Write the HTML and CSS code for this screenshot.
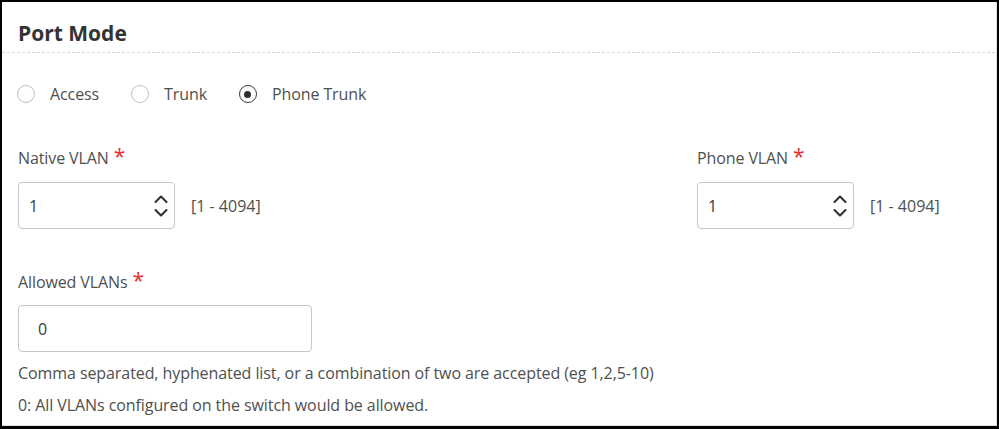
FILE: index.html
```html
<!DOCTYPE html>
<html lang="en">
<head>
<meta charset="utf-8">
<title>Port Mode</title>
<link rel="stylesheet" href="styles.css">
</head>
<body>
<div class="frame">
  <div class="panel">
    <div class="header">
      <h2 class="title">Port Mode</h2>
    </div>
    <div class="content">
      <div class="radios">
        <label class="radio"><span class="circle"></span><span class="rlabel">Access</span></label>
        <label class="radio"><span class="circle"></span><span class="rlabel">Trunk</span></label>
        <label class="radio"><span class="circle checked"></span><span class="rlabel">Phone Trunk</span></label>
      </div>

      <div class="vlan-row">
        <div class="field">
          <div class="flabel">Native VLAN<span class="req">*</span></div>
          <div class="input-row">
            <div class="num-input">
              <span class="val">1</span>
              <svg class="spin" width="14" height="26" viewBox="0 0 14 26"><path d="M1.5 9 L7 3.5 L12.5 9" fill="none" stroke="#2f2f2f" stroke-width="2.1" stroke-linecap="round" stroke-linejoin="round"/><path d="M1.5 17 L7 22.5 L12.5 17" fill="none" stroke="#2f2f2f" stroke-width="2.1" stroke-linecap="round" stroke-linejoin="round"/></svg>
            </div>
            <span class="range">[1 - 4094]</span>
          </div>
        </div>
        <div class="field">
          <div class="flabel">Phone VLAN<span class="req">*</span></div>
          <div class="input-row">
            <div class="num-input">
              <span class="val">1</span>
              <svg class="spin" width="14" height="26" viewBox="0 0 14 26"><path d="M1.5 9 L7 3.5 L12.5 9" fill="none" stroke="#2f2f2f" stroke-width="2.1" stroke-linecap="round" stroke-linejoin="round"/><path d="M1.5 17 L7 22.5 L12.5 17" fill="none" stroke="#2f2f2f" stroke-width="2.1" stroke-linecap="round" stroke-linejoin="round"/></svg>
            </div>
            <span class="range">[1 - 4094]</span>
          </div>
        </div>
      </div>

      <div class="allowed">
        <div class="flabel">Allowed VLANs<span class="req">*</span></div>
        <div class="text-input"><span class="val">0</span></div>
        <p class="help">Comma separated, hyphenated list, or a combination of two are accepted (eg 1,2,5-10)</p>
        <p class="help">0: All VLANs configured on the switch would be allowed.</p>
      </div>
    </div>
  </div>
</div>
</body>
</html>
```

FILE: styles.css
```css
html, body {
  margin: 0;
  padding: 0;
  background: #ffffff;
}

body {
  font-family: "Open Sans", "Noto Sans", "Liberation Sans", sans-serif;
  color: #4f4f4f;
}

.frame {
  width: 999px;
  height: 429px;
  box-sizing: border-box;
  border: 2px solid #000;
  border-bottom-width: 3px;
  overflow: hidden;
}

.panel {
  height: 100%;
  box-sizing: border-box;
  border-right: 1px solid #e2e2e2;
  border-bottom: 1px solid #e2e2e2;
}

.header {
  padding: 17px 16px 6px;
  background-image: repeating-linear-gradient(to right, #d6d6d6 0 3px, transparent 3px 5px);
  background-size: 100% 1px;
  background-position: left bottom;
  background-repeat: no-repeat;
}

.title {
  margin: 0;
  font-size: 21px;
  line-height: 28px;
  font-weight: 700;
  color: #333333;
}

.content {
  padding: 0 16px;
}

.radios {
  display: flex;
  align-items: center;
  gap: 33px;
  margin-top: 30px;
  height: 22px;
}

.radio {
  display: flex;
  align-items: center;
  font-size: 16px;
  line-height: 22px;
  color: #4f4f4f;
  letter-spacing: -0.1px;
}

.circle {
  width: 18px;
  height: 18px;
  box-sizing: border-box;
  border: 1.5px solid #c0c0c0;
  border-radius: 50%;
  margin-left: -1px;
  display: flex;
  align-items: center;
  justify-content: center;
}

.circle.checked {
  border-color: #3a3a3a;
}

.circle.checked::after {
  content: "";
  width: 7px;
  height: 7px;
  border-radius: 50%;
  background: #2f2f2f;
}

.rlabel {
  margin-left: 15px;
}

.vlan-row {
  display: grid;
  grid-template-columns: 679px auto;
  margin-top: 42px;
}

.flabel {
  font-size: 16px;
  line-height: 22px;
  color: #4f4f4f;
  letter-spacing: -0.1px;
}

.req {
  color: #ee2a2a;
  font-size: 21px;
  line-height: 0;
  margin-left: 5px;
}

.input-row {
  display: flex;
  align-items: center;
  gap: 16px;
  margin-top: 13px;
}

.num-input {
  width: 157px;
  height: 47px;
  box-sizing: border-box;
  border: 1px solid #c6c6c6;
  border-radius: 4px;
  display: flex;
  align-items: center;
  justify-content: space-between;
  padding: 0 6px 0 10px;
}

.val {
  font-size: 16px;
  line-height: 22px;
  color: #3a3a3a;
}

.spin {
  display: block;
}

.range {
  font-size: 16px;
  line-height: 22px;
  color: #4f4f4f;
}

.allowed {
  margin-top: 42px;
}

.text-input {
  width: 294px;
  height: 47px;
  box-sizing: border-box;
  border: 1px solid #c6c6c6;
  border-radius: 4px;
  margin-top: 12px;
  display: flex;
  align-items: center;
  padding: 0 0 0 19px;
}

.help {
  margin: 10px 0 0;
  font-size: 16px;
  line-height: 22px;
  color: #4f4f4f;
  letter-spacing: -0.08px;
}
```
